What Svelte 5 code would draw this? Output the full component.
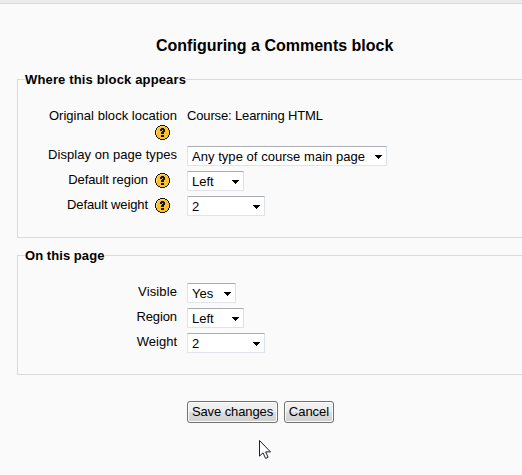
<script>
  const where = [
    { label: 'Display on page types', value: 'Any type of course main page', width: 200, track: 0.05, valueTrack: 0.04 },
    { label: 'Default region', value: 'Left', width: 57, help: true, track: -0.08 },
    { label: 'Default weight', value: '2', width: 78, help: true, track: -0.1 }
  ];
  const page = [
    { label: 'Visible', value: 'Yes', width: 49, track: 0.12 },
    { label: 'Region', value: 'Left', width: 57, track: -0.1 },
    { label: 'Weight', value: '2', width: 78 }
  ];
</script>

{#snippet help()}
  <svg class="help" width="15" height="15" viewBox="0 0 15 15" shape-rendering="crispEdges">
    <path fill="#171508" d="M5 0h5v1h2v1h1v1h1v2h1v5h-1v2h-1v1h-1v1h-2v1H5v-1H3v-1H2v-1H1v-2H0V5h1V3h1V2h1V1h2z" />
    <path fill="#f9c22e" d="M5 1h5v1h2v1h1v2h1v5h-1v2h-1v1h-2v1H5v-1H3v-1H2v-2H1V5h1V3h1V2h2z" />
    <path fill="#ffdb66" d="M5 1h5v1H5zM3 2h2v1H3zM2 3h1v2H2zM1 5h1v4H1z" />
    <path fill="#171508" d="M6 3h3v1h1v3H9v2H6V7h1V6h1V5H7v1H5V4h1zM6 10h3v2H6z" />
  </svg>
{/snippet}

{#snippet row(item)}
  <div class="row">
    <div class="label"><span style:letter-spacing="{item.track ?? 0}px">{item.label}</span>{#if item.help}{@render help()}{/if}</div>
    <div class="select" style:width="{item.width}px">
      <span style:letter-spacing="{item.valueTrack ?? 0}px">{item.value}</span>
      <svg width="7" height="4" viewBox="0 0 7 4" shape-rendering="crispEdges"><path d="M0 0h7v1H6v1H5v1H4v1H3V3H2V2H1V1H0z" /></svg>
    </div>
  </div>
{/snippet}

<main>
  <h2>Configuring a Comments block</h2>
  <fieldset class="first">
    <legend>Where this block appears</legend>
    <div class="row location">
      <div class="label"><span>Original block location</span>{@render help()}</div>
      <div class="static">Course: Learning HTML</div>
    </div>
    {#each where as item}{@render row(item)}{/each}
  </fieldset>
  <fieldset class="second">
    <legend>On this page</legend>
    {#each page as item}{@render row(item)}{/each}
  </fieldset>
  <div class="actions">
    <button class="save">Save changes</button>
    <button class="cancel">Cancel</button>
  </div>
  <svg class="cursor" width="13" height="20" viewBox="0 0 13 20">
    <path d="M.5.5v15.6l3.5-3.3 2.6 5.6 2.5-1.1-2.5-5.4h4.9z" fill="#fff" stroke="#1c1c2c" />
  </svg>
</main>

<style>
  :global(body) { margin: 0; overflow: hidden; }
  main {
    box-sizing: border-box;
    position: relative;
    width: 522px;
    height: 475px;
    overflow: hidden;
    border-top: 3px solid #ebebeb;
    box-shadow: inset 0 1px #d9d9d9;
    background: #fafafa;
    color: #000;
    font: 13px/15px "Liberation Sans", Arial, sans-serif;
  }
  h2 {
    margin: 34px 0 0 156px;
    font-size: 16px;
    line-height: 18px;
    white-space: nowrap;
  }
  fieldset {
    box-sizing: border-box;
    width: 540px;
    margin: 0 0 0 17px;
    padding: 0;
    border: 1px solid #dadada;
    min-width: 0;
  }
  .first { height: 166px; margin-top: 17px; }
  .second { height: 127px; margin-top: 10px; }
  legend {
    height: 15px;
    margin-left: 7px;
    padding: 0 1px 0 0;
    font-weight: bold;
    white-space: nowrap;
  }
  .first legend { padding-right: 0; letter-spacing: 0.15px; }
  .second legend { margin-bottom: 20px; letter-spacing: 0.06px; }
  .row { display: flex; gap: 10px; height: 20px; margin-bottom: 5px; }
  .first .location { height: 33px; margin: 21px 0 5px; }
  .label {
    display: flex;
    justify-content: flex-end;
    width: 159px;
    padding-top: 1px;
    white-space: nowrap;
  }
  .help { flex: none; margin: 1px 7px 0; }
  .location .label { flex-direction: column; align-items: flex-end; justify-content: flex-start; padding: 0; letter-spacing: 0.04px; }
  .location .help { margin-top: 2px; }
  .static { letter-spacing: -0.14px; }
  .select {
    box-sizing: border-box;
    display: flex;
    align-items: center;
    justify-content: space-between;
    height: 20px;
    padding: 1px 4px 0;
    border: 1px solid #e2e3ea;
    border-top-color: #abadb3;
    border-right-color: #dbdfe6;
    border-radius: 1px;
    background: #fff;
    white-space: nowrap;
  }
  .actions { display: flex; gap: 6px; margin: 26px 0 0 187px; }
  button {
    box-sizing: border-box;
    height: 22px;
    padding: 0 0 1px;
    border: 1px solid #707070;
    border-radius: 3px;
    box-shadow: inset 0 0 0 1px #fcfcfc;
    background: linear-gradient(#f2f2f2 0%, #ebebeb 50%, #dddddd 51%, #cfcfcf 100%);
    color: #000;
    font: inherit;
    white-space: nowrap;
  }
  .save { width: 91px; letter-spacing: -0.1px; }
  .cancel { width: 50px; }
  .cursor { position: absolute; left: 259px; top: 437px; }
</style>
